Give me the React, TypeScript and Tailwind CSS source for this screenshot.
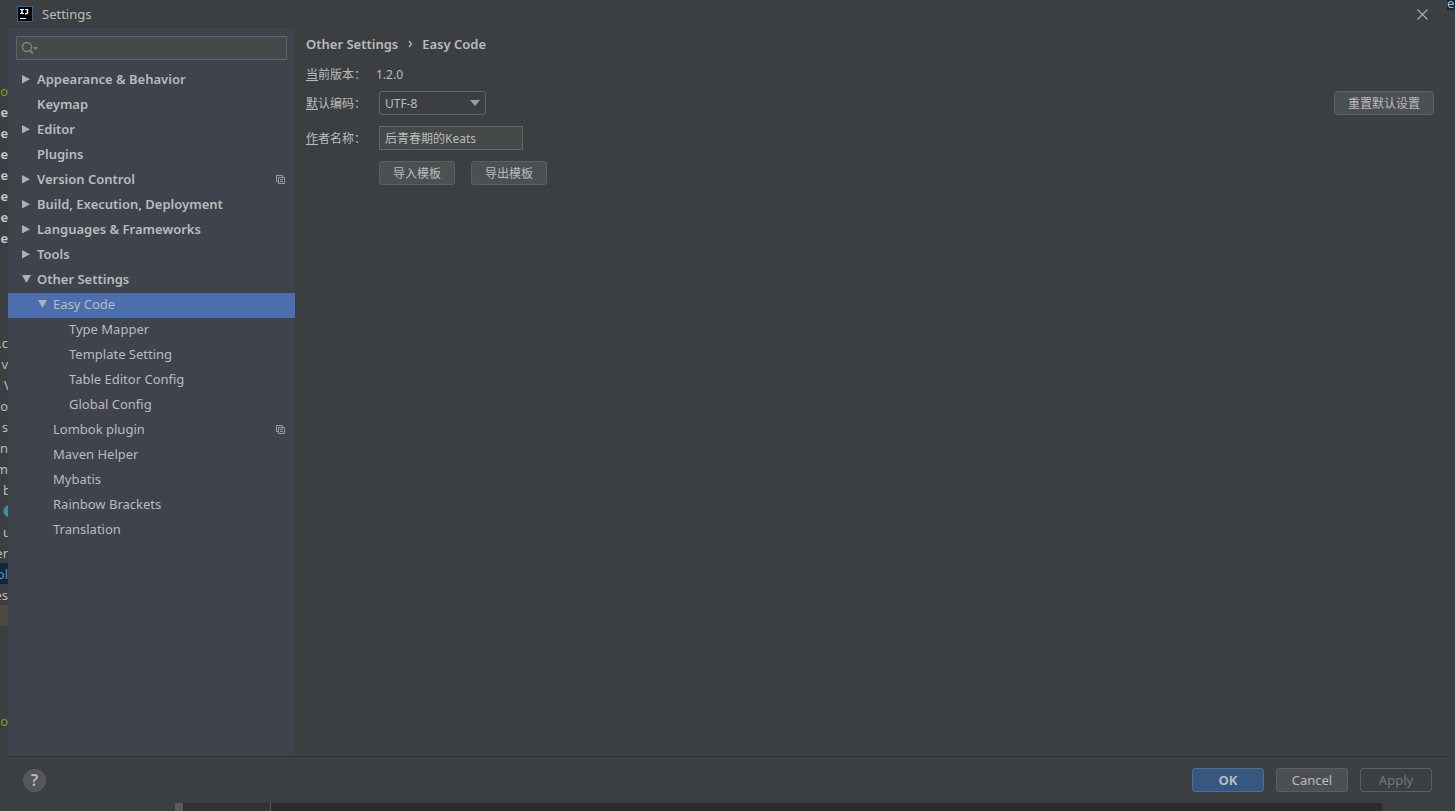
import React, { useState } from 'react';

interface TreeItem {
  label: string;
  level: 0 | 1 | 2;
  state?: 'open' | 'closed';
  project?: boolean;
}

const TREE: TreeItem[] = [
  { label: 'Appearance & Behavior', level: 0, state: 'closed' },
  { label: 'Keymap', level: 0 },
  { label: 'Editor', level: 0, state: 'closed' },
  { label: 'Plugins', level: 0 },
  { label: 'Version Control', level: 0, state: 'closed', project: true },
  { label: 'Build, Execution, Deployment', level: 0, state: 'closed' },
  { label: 'Languages & Frameworks', level: 0, state: 'closed' },
  { label: 'Tools', level: 0, state: 'closed' },
  { label: 'Other Settings', level: 0, state: 'open' },
  { label: 'Easy Code', level: 1, state: 'open' },
  { label: 'Type Mapper', level: 2 },
  { label: 'Template Setting', level: 2 },
  { label: 'Table Editor Config', level: 2 },
  { label: 'Global Config', level: 2 },
  { label: 'Lombok plugin', level: 1, project: true },
  { label: 'Maven Helper', level: 1 },
  { label: 'Mybatis', level: 1 },
  { label: 'Rainbow Brackets', level: 1 },
  { label: 'Translation', level: 1 },
];

const INDENT = ['pl-3', 'pl-7', 'pl-11'];

// Slice of the project tree still visible left of the dialog
const EDGE_ROWS: { text: string; className?: string }[] = [
  { text: 'o', className: 'justify-end text-[#8a9a10]' },
  ...Array.from({ length: 7 }, () => ({ text: 'be', className: 'justify-end font-semibold text-[#c8cacc]' })),
  { text: '' },
  { text: '' },
  { text: '' },
  { text: '' },
  { text: '.c', className: 'justify-end' },
  { text: 'v', className: 'justify-end' },
  { text: 'V', className: 'pl-1' },
  { text: 'o', className: 'justify-end' },
  { text: 's', className: 'justify-end' },
  { text: 'n', className: 'justify-end' },
  { text: 'm', className: 'justify-end' },
  { text: 'b', className: 'pl-[3px]' },
  { text: '●', className: 'pl-[3px] text-[#3592a5]' },
  { text: 'u', className: 'pl-[3px]' },
  { text: 'er', className: 'justify-end' },
  { text: 'ol', className: 'justify-end bg-[#0d293e] text-[#6897bb]' },
  { text: 'es', className: 'justify-end' },
  { text: '', className: 'bg-[#4e4a3f]' },
  { text: '' },
  { text: '' },
  { text: '' },
  { text: '' },
  { text: 'o', className: 'justify-end text-[#8a9a10]' },
];

const BUTTON =
  'h-6 rounded-[3px] border border-[#5e6060] bg-[#4c5052] flex items-center justify-center';

function Arrow({ open }: { open: boolean }) {
  return (
    <svg className="w-4 h-4 fill-[#adb0b4]" viewBox="0 0 16 16">
      {open ? <path d="M2 4h9l-4.5 8z" /> : <path d="M2 4v8.5l8-4.2z" />}
    </svg>
  );
}

function ProjectIcon() {
  return (
    <svg className="w-[9px] h-[9px]" viewBox="0 0 9 9" fill="none" stroke="#9a9da3">
      <path d="M2 6.5H.5v-6h6V2" />
      <path d="M2.5 2.5h6v6h-6z" />
      <path d="M4 4.5h3M4 6.5h3" />
    </svg>
  );
}

function Logo() {
  return (
    <svg className="w-4 h-4" viewBox="0 0 16 16" fill="none">
      <rect width="16" height="16" fill="#2566ad" />
      <rect x="1" y="1" width="14" height="14" fill="#000" />
      <path d="M3 3.5h4M3 7.5h4M8 3.5h3" stroke="#fff" />
      <path d="M5 3v5M10.5 3v3.5q0 1.3-1.2 1.3H8" stroke="#fff" strokeWidth="1.5" />
      <path d="M3 12.5h6" stroke="#fff" />
    </svg>
  );
}

const Sidebar: React.FC = () => {
  const [selected, setSelected] = useState('Easy Code');

  return (
    <aside className="w-[287px] shrink-0 bg-[#3f434c] pt-2">
      {/* Search */}
      <div className="mx-2 h-6 flex items-center border border-[#646464] bg-[#45494a] px-1">
        <svg className="w-[18px] h-4 shrink-0" viewBox="0 0 18 16" fill="none">
          <circle cx="6" cy="7" r="4.5" stroke="#7f8487" strokeWidth="1.5" />
          <path d="M9 10.5l3 3" stroke="#7f8487" strokeWidth="1.8" />
          <path d="M12 7h5l-2.5 3z" fill="#7f8487" />
        </svg>
        <input type="text" aria-label="Search" className="flex-1 min-w-0 bg-transparent outline-none" />
      </div>

      {/* Tree */}
      <ul className="pt-2">
        {TREE.map((item) => (
          <li key={item.label}>
            <button
              onClick={() => setSelected(item.label)}
              className={`w-full h-[25px] flex items-center pb-[3px] pr-[10px] text-left ${INDENT[item.level]} ${
                item.level === 0 ? 'font-semibold' : ''
              } ${selected === item.label ? 'bg-[#4b6eaf]' : ''}`}
            >
              <span className="w-[17px] shrink-0">
                {item.state && <Arrow open={item.state === 'open'} />}
              </span>
              <span className="flex-1">{item.label}</span>
              {item.project && <ProjectIcon />}
            </button>
          </li>
        ))}
      </ul>
    </aside>
  );
};

const EasyCodeForm: React.FC = () => {
  const [encoding, setEncoding] = useState('UTF-8');
  const [author, setAuthor] = useState('后青春期的Keats');

  return (
    <main className="flex-1 min-w-0 pl-[11px] pr-[13px]">
      <h1 className="h-8 flex items-center gap-2 font-semibold">
        <span>Other Settings</span>
        <svg className="w-2 h-2" viewBox="0 0 8 8" fill="none" stroke="#bbbbbb" strokeWidth="1.2">
          <path d="M3 1l2.5 3L3 7" />
        </svg>
        <span>Easy Code</span>
      </h1>

      <div className="flex flex-col text-xs">
        <div className="h-[31px] flex items-center pb-px">
          <span className="w-[70px]"><u>当</u>前版本：</span>
          <span>1.2.0</span>
        </div>

        <div className="flex items-center">
          <label htmlFor="encoding" className="w-[73px] pt-0.5"><u>默</u>认编码：</label>
          <div className="relative">
            <select
              id="encoding"
              value={encoding}
              onChange={(e) => setEncoding(e.target.value)}
              className="w-[107px] h-6 appearance-none rounded-[3px] border border-[#646464] bg-[#3c3f41] pl-[5px] pt-0.5 outline-none"
            >
              <option>UTF-8</option>
              <option>GBK</option>
            </select>
            <svg className="absolute right-[6px] top-[9px] w-[10px] h-[6px] pointer-events-none fill-[#9a9da0]" viewBox="0 0 10 6">
              <path d="M0 0h10L5 6z" />
            </svg>
          </div>
          <button className={`${BUTTON} ml-auto w-[100px] pt-0.5`}>重置默认设置</button>
        </div>

        <div className="flex items-center pt-[11px]">
          <label htmlFor="author" className="w-[73px] pt-0.5"><u>作</u>者名称：</label>
          <input
            id="author"
            type="text"
            value={author}
            onChange={(e) => setAuthor(e.target.value)}
            className="w-36 h-6 border border-[#646464] bg-[#45494a] px-[5px] outline-none"
          />
        </div>

        <div className="flex gap-4 pt-[11px] pl-[73px]">
          <button className={`${BUTTON} w-[76px] pt-0.5`}>导入模板</button>
          <button className={`${BUTTON} w-[76px] pt-0.5`}>导出模板</button>
        </div>
      </div>
    </main>
  );
};

const App: React.FC = () => {
  return (
    <div className="min-h-screen flex flex-col bg-[#3c3f41] text-[#bbbbbb] text-[13px] leading-4 font-['Noto_Sans','Noto_Sans_CJK_SC',sans-serif]">
      <div className="flex-1 flex">
        {/* Left edge */}
        <div className="w-2 shrink-0 overflow-hidden pt-20">
          {EDGE_ROWS.map((row, i) => (
            <div key={i} className={`h-[21px] flex items-center ${row.className ?? ''}`}>
              {row.text}
            </div>
          ))}
        </div>

        {/* Dialog */}
        <div className="flex-1 min-w-0 flex flex-col">
          <header className="h-7 flex items-center pl-[9px] pr-[19px]">
            <Logo />
            <span className="pl-[9px]">Settings</span>
            <button aria-label="Close" className="ml-auto">
              <svg className="w-[11px] h-[11px]" viewBox="0 0 11 11" fill="none" stroke="#a8abad" strokeWidth="1.2">
                <path d="M.5.5l10 10M10.5.5l-10 10" />
              </svg>
            </button>
          </header>

          <div className="flex-1 flex">
            <Sidebar />
            <EasyCodeForm />
          </div>

          <footer className="h-[47px] flex items-center gap-3 border-t border-[#2f3233] px-[15px]">
            <button
              aria-label="Help"
              className="w-[23px] h-[23px] mr-auto rounded-full border border-[#5e6060] bg-[#53575a] text-base font-semibold flex items-center justify-center"
            >
              ?
            </button>
            <button className="w-[72px] h-6 rounded-[3px] border border-[#4c708c] bg-[#365880] font-bold">OK</button>
            <button className={`${BUTTON} w-[72px]`}>Cancel</button>
            <button disabled className="w-[72px] h-6 rounded-[3px] border border-[#5e6060] text-[#777777]">Apply</button>
          </footer>
        </div>

        {/* Right edge */}
        <div className="w-2 shrink-0 overflow-hidden">
          <div className="h-[10px] flex items-end bg-[#0d293e] pb-1 leading-[6px]">e</div>
        </div>
      </div>

      {/* Bottom edge */}
      <div className="h-2 flex">
        <div className="w-[175px]" />
        <div className="w-2 bg-[#595b5d]" />
        <div className="w-[88px] bg-[#313335] border-r border-[#5a5c5e]" />
        <div className="flex-1 bg-[#2b2b2b]" />
        <div className="w-[73px]" />
      </div>
    </div>
  );
};

export default App;
